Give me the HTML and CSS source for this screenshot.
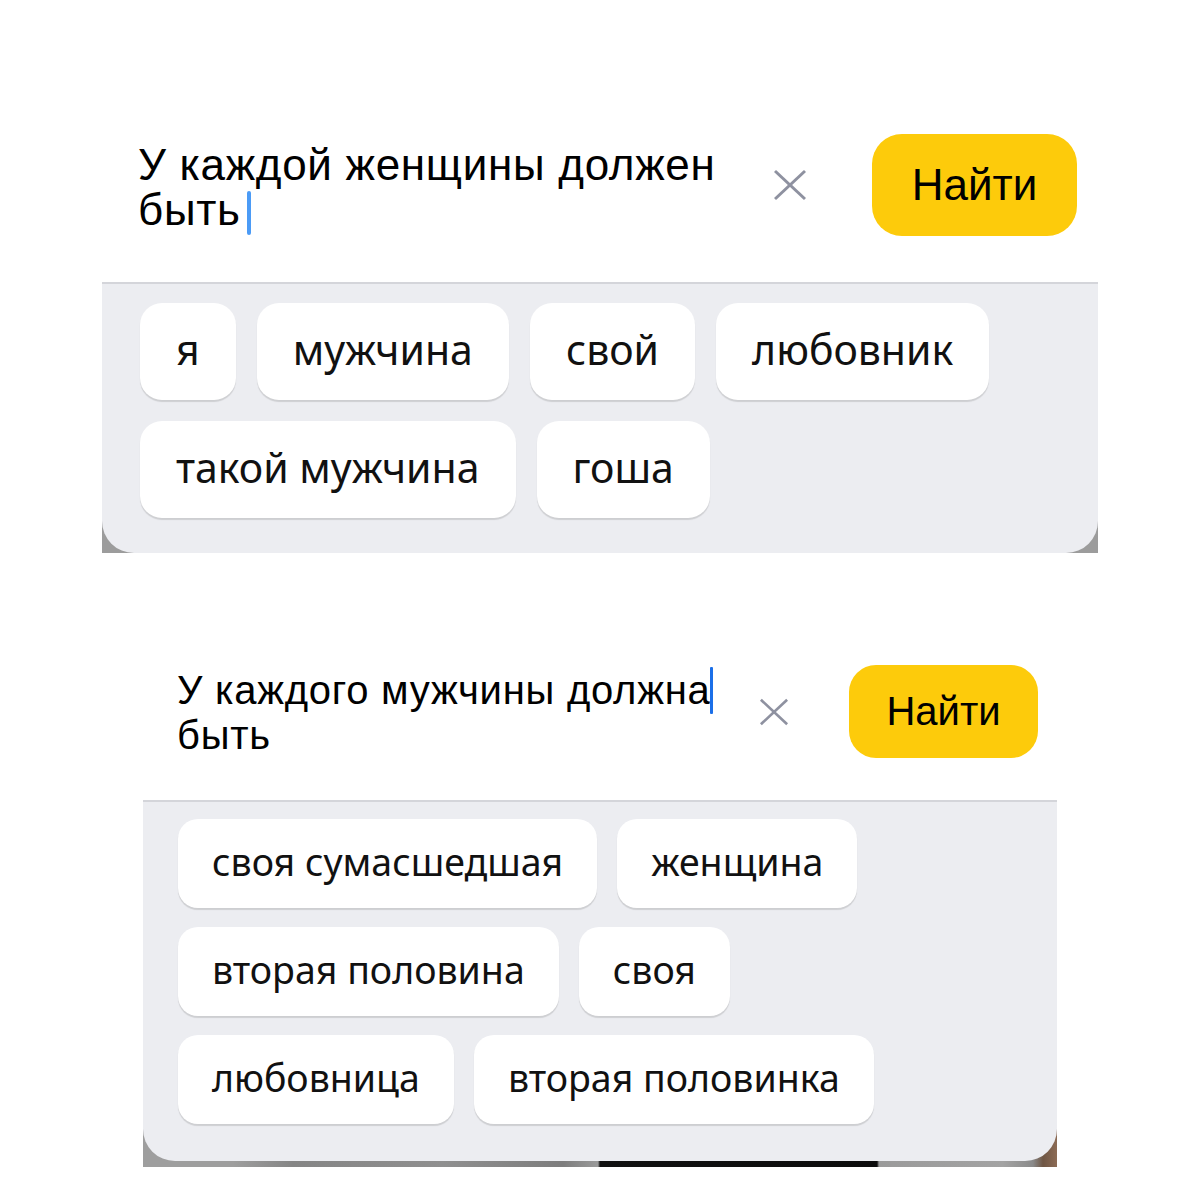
FILE: index.html
```html
<!DOCTYPE html>
<html lang="ru">
<head>
    <meta charset="UTF-8">
    <meta name="viewport" content="width=device-width, initial-scale=1.0">
    <title>Подсказки поиска</title>
    <link rel="stylesheet" href="styles.css">
</head>
<body>

    <!-- first screenshot -->
    <div class="shot shot-her">
        <div class="search">
            <div class="query">У каждой женщины должен<br>быть<span class="caret"></span></div>
            <svg class="clear" viewBox="0 0 34 32">
                <line x1="2" y1="2" x2="32" y2="30" />
                <line x1="32" y1="2" x2="2" y2="30" />
            </svg>
            <button class="find">Найти</button>
        </div>
        <div class="backdrop">
            <div class="suggest">
                <span class="chip">я</span>
                <span class="chip">мужчина</span>
                <span class="chip">свой</span>
                <span class="chip">любовник</span>
                <span class="chip">такой мужчина</span>
                <span class="chip">гоша</span>
            </div>
        </div>
    </div>

    <!-- second screenshot -->
    <div class="shot shot-him">
        <div class="search">
            <div class="query">У каждого мужчины должна<span class="caret"></span><br>быть</div>
            <svg class="clear" viewBox="0 0 34 32">
                <line x1="2" y1="2" x2="32" y2="30" />
                <line x1="32" y1="2" x2="2" y2="30" />
            </svg>
            <button class="find">Найти</button>
        </div>
        <div class="backdrop">
            <div class="suggest">
                <span class="chip">своя сумасшедшая</span>
                <span class="chip">женщина</span>
                <span class="chip">вторая половина</span>
                <span class="chip">своя</span>
                <span class="chip">любовница</span>
                <span class="chip">вторая половинка</span>
            </div>
        </div>
    </div>

</body>
</html>
```

FILE: styles.css
```css
body {
    margin: 0;
    background: #ffffff;
    font-family: "Liberation Sans", Arial, sans-serif;
    color: #000;
}

.shot {
    box-sizing: border-box;
}

.search {
    display: flex;
    align-items: center;
    background: #ffffff;
}

.query {
    flex: 1;
    white-space: nowrap;
    font-family: "Liberation Sans", Arial, sans-serif;
}

.caret {
    display: inline-block;
}

.clear {
    fill: none;
    stroke: #8e91a0;
    stroke-width: 3;
}

.find {
    border: none;
    background: #fdcb0b;
    color: #000;
    font-family: "Liberation Sans", Arial, sans-serif;
    padding: 0;
    cursor: pointer;
}

.backdrop {
    background-repeat: no-repeat;
    background-position: bottom left;
}

.suggest {
    display: flex;
    flex-wrap: wrap;
    align-content: flex-start;
    background: #ecedf1;
    border-top: 2px solid #d4d5da;
}

.chip {
    display: flex;
    align-items: center;
    box-sizing: border-box;
    background: #ffffff;
    font-family: "Noto Sans", "Open Sans", sans-serif;
    color: #111;
    white-space: nowrap;
    box-shadow: 0 2px 1px rgba(0, 0, 0, 0.13);
}

/* first one */
.shot-her {
    margin-left: 102px;
    width: 996px;
}

.shot-her .search {
    padding: 134px 21px 46px 36px;
}

.shot-her .query {
    font-size: 44px;
    letter-spacing: 0.7px;
    line-height: 45px;
    margin-top: 6px;
    margin-right: 20px;
}

.shot-her .caret {
    width: 4px;
    height: 44px;
    margin-left: 6px;
    border-radius: 2px;
    background: #4b9bf6;
    vertical-align: -10px;
}

.shot-her .clear {
    width: 34px;
    height: 32px;
    margin-right: 65px;
}

.shot-her .find {
    width: 205px;
    height: 102px;
    border-radius: 30px;
    font-size: 44px;
}

.shot-her .backdrop {
    background-image: linear-gradient(#9c9c9c, #9c9c9c);
    background-size: 100% 34px;
}

.shot-her .suggest {
    gap: 21px 21px;
    padding: 19px 38px 35px;
    border-radius: 0 0 32px 32px;
}

.shot-her .chip {
    height: 97px;
    padding: 0 36px 5px;
    border-radius: 22px;
    font-size: 41px;
}

/* second one */
.shot-him {
    margin-left: 143px;
    width: 914px;
}

.shot-him .search {
    padding: 112px 19px 42px 34px;
}

.shot-him .query {
    font-size: 40px;
    letter-spacing: 0.75px;
    line-height: 43px;
    margin-right: 20px;
}

.shot-him .caret {
    width: 3px;
    height: 47px;
    border-radius: 1px;
    background: #1b6fe8;
    vertical-align: -10px;
    margin-left: -1px;
}

.shot-him .clear {
    width: 30px;
    height: 28px;
    margin-right: 60px;
}

.shot-him .find {
    width: 189px;
    height: 93px;
    border-radius: 27px;
    font-size: 40px;
}

.shot-him .backdrop {
    padding-bottom: 6px;
    background-image: linear-gradient(to right, #9e9e9e 0, #9e9e9e 90px, #858585 150px, #8f8f8f 300px, #7d7d7d 420px, #9a9a9a 455px, #111 457px, #0c0c0c 734px, #9a9a9a 736px, #a3a3a3 860px, #8a8a8a 890px, #6f5644 900px, #8c6b55 914px);
    background-size: 100% 40px;
}

.shot-him .suggest {
    gap: 19px 20px;
    padding: 17px 35px 37px;
    border-radius: 0 0 32px 32px;
}

.shot-him .chip {
    height: 89px;
    padding: 0 34px 4px;
    border-radius: 20px;
    font-size: 37.5px;
}
```
